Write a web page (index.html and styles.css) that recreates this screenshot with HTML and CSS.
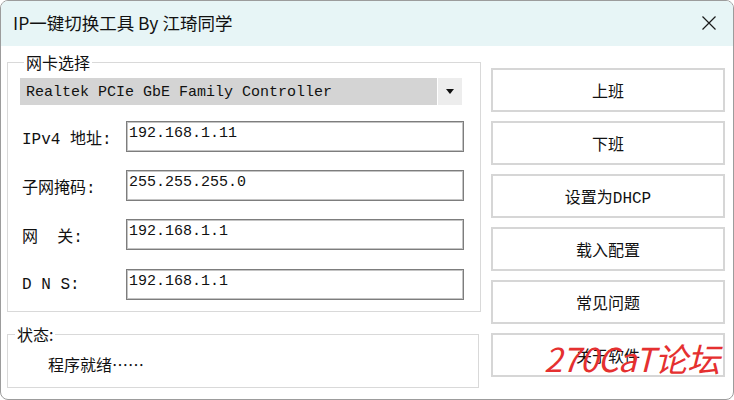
FILE: index.html
```html
<!DOCTYPE html>
<html lang="zh-CN">
<head>
    <meta charset="UTF-8">
    <title>IP一键切换工具 By 江琦同学</title>
    <link rel="stylesheet" href="styles.css">
</head>
<body>
    <div class="window">
        <div class="titlebar">
            <span class="title">IP一键切换工具 By 江琦同学</span>
            <svg class="close" width="16" height="16" viewBox="0 0 16 16">
                <path d="M1.5 1.5 L14.5 14.5 M14.5 1.5 L1.5 14.5" stroke="#1a1a1a" stroke-width="1.2" fill="none"/>
            </svg>
        </div>

        <div class="content">
            <div class="left">
                <fieldset class="group nic">
                    <legend>网卡选择</legend>
                    <div class="combo">
                        <span class="combo-text">Realtek PCIe GbE Family Controller</span>
                        <span class="combo-btn">
                            <svg width="8" height="5" viewBox="0 0 8 5"><path d="M0 0 H8 L4 5 Z" fill="#111"/></svg>
                        </span>
                    </div>
                    <div class="field">
                        <label>IPv4 地址:</label>
                        <input class="text" type="text" value="192.168.1.11">
                    </div>
                    <div class="field">
                        <label>子网掩码:</label>
                        <input class="text" type="text" value="255.255.255.0">
                    </div>
                    <div class="field">
                        <label>网&nbsp;&nbsp;关:</label>
                        <input class="text" type="text" value="192.168.1.1">
                    </div>
                    <div class="field">
                        <label>D N S:</label>
                        <input class="text" type="text" value="192.168.1.1">
                    </div>
                </fieldset>

                <fieldset class="group status">
                    <legend>状态:</legend>
                    <div class="status-text">程序就绪……</div>
                </fieldset>
            </div>

            <div class="buttons">
                <button class="btn">上班</button>
                <button class="btn">下班</button>
                <button class="btn">设置为DHCP</button>
                <button class="btn">载入配置</button>
                <button class="btn">常见问题</button>
                <button class="btn">关于软件</button>
            </div>
        </div>

        <div class="watermark">270CaT论坛</div>
    </div>
</body>
</html>
```

FILE: styles.css
```css
body {
    margin: 0;
    background: #ffffff;
    font-family: 'Noto Sans CJK SC', sans-serif;
}
.window {
    position: relative;
    width: 734px;
    height: 400px;
    box-sizing: border-box;
    border: 1px solid #9c9c9c;
    border-radius: 8px;
    overflow: hidden;
    background: #ffffff;
}
.titlebar {
    height: 45px;
    background: #e7f5f6;
    display: flex;
    align-items: center;
    justify-content: space-between;
    padding: 0 16px 0 12px;
}
.title {
    font-size: 17.5px;
    color: #111;
    margin-top: -2px;
}
.close {
    margin-top: -1px;
}
.content {
    display: flex;
    gap: 10px;
    padding: 0 8px 0 6px;
}
.left {
    width: 474px;
    display: flex;
    flex-direction: column;
}
.group {
    margin: 0;
    padding: 0;
    border: 1px solid #d9d9d9;
    min-width: 0;
}
.group legend {
    margin-left: 4px;
    padding: 0 2px;
    font-size: 16px;
    line-height: 20px;
    color: #111;
}
.nic {
    margin-top: 6px;
    padding: 6px 0 0 12px;
    height: 260px;
    box-sizing: border-box;
}
.combo {
    display: flex;
    width: 442px;
    height: 27px;
}
.combo-text {
    flex: 1;
    background: #d4d4d4;
    padding-left: 6px;
    font-family: 'Liberation Mono', 'Noto Sans CJK SC', monospace;
    font-size: 15px;
    line-height: 29px;
    color: #111;
}
.combo-btn {
    width: 24px;
    margin-left: 1px;
    background: #ededed;
    display: flex;
    align-items: center;
    justify-content: center;
}
.field {
    display: flex;
    align-items: center;
    margin-top: 18px;
}
.combo + .field {
    margin-top: 16px;
}
.field:last-child {
    margin-top: 19px;
}
.field label {
    width: 104px;
    padding-left: 2px;
    font-family: 'Liberation Mono', 'Noto Sans CJK SC', monospace;
    font-size: 16px;
    color: #111;
}
.text {
    width: 338px;
    height: 31px;
    box-sizing: border-box;
    margin: 0;
    border: 1px solid #7d7d7d;
    box-shadow: inset 0 0 0 1px #c4c4c4;
    padding: 0 2px 7px;
    font-family: 'Liberation Mono', 'Noto Sans CJK SC', monospace;
    font-size: 15px;
    color: #111;
    background: #fff;
    outline: none;
}
.status {
    margin-top: 12px;
    height: 64px;
    box-sizing: border-box;
    width: 472px;
}
.status legend {
    margin-left: 7px;
}
.status-text {
    padding: 8px 0 0 40px;
    font-size: 16px;
    color: #111;
}
.buttons {
    width: 234px;
    display: flex;
    flex-direction: column;
    gap: 9px;
    padding-top: 22px;
}
.btn {
    height: 44px;
    margin: 0;
    background: #ffffff;
    border: 2px solid #d6d6d6;
    font-family: 'Liberation Mono', 'Noto Sans CJK SC', monospace;
    font-size: 16px;
    color: #111;
}
.watermark {
    position: absolute;
    left: 543px;
    top: 333px;
    font-family: 'Noto Sans CJK SC', sans-serif;
    font-size: 33px;
    font-style: italic;
    font-weight: 400;
    letter-spacing: -0.5px;
    color: #e53030;
}
```
